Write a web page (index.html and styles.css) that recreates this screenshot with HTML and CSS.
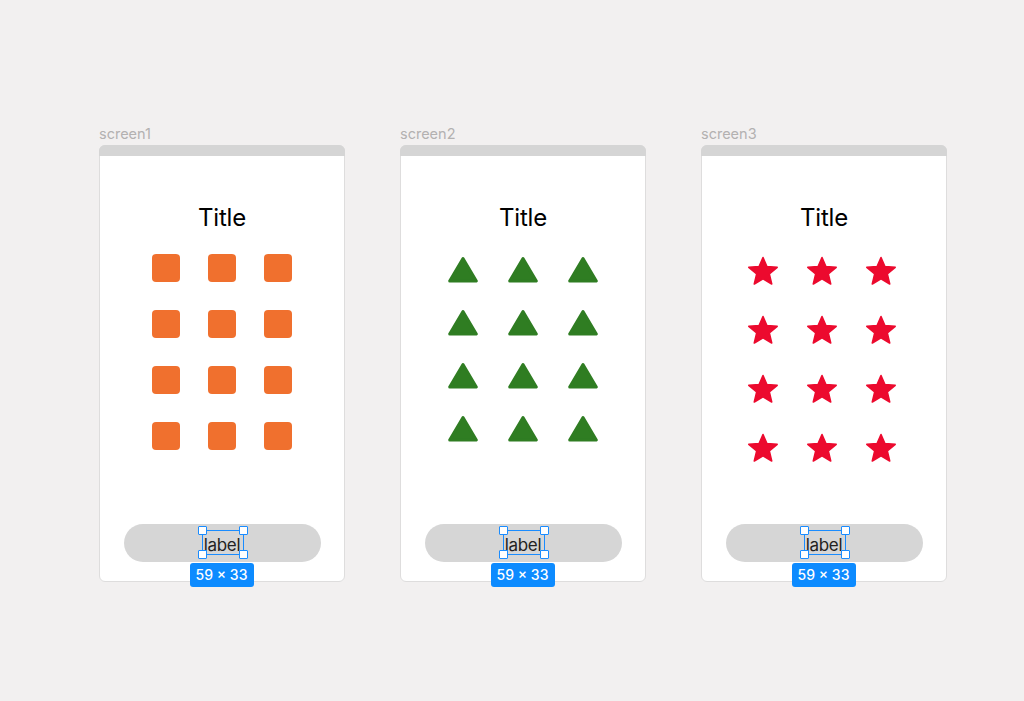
FILE: index.html
```html
<!DOCTYPE html>
<html lang="en">
<head>
    <meta charset="UTF-8">
    <meta name="viewport" content="width=device-width, initial-scale=1.0">
    <title>Screens</title>
    <link rel="stylesheet" href="styles.css">
</head>
<body>
    <div class="screens">

        <!-- screen 1: squares -->
        <div class="screen">
            <div class="screen-name">screen1</div>
            <div class="frame">
                <div class="frame-bar"></div>
                <h1 class="title">Title</h1>
                <div class="grid grid-squares">
                    <div class="square"></div><div class="square"></div><div class="square"></div>
                    <div class="square"></div><div class="square"></div><div class="square"></div>
                    <div class="square"></div><div class="square"></div><div class="square"></div>
                    <div class="square"></div><div class="square"></div><div class="square"></div>
                </div>
                <div class="pill">
                    <span class="pill-label">label</span>
                    <div class="selection">
                        <span class="handle tl"></span><span class="handle tr"></span>
                        <span class="handle bl"></span><span class="handle br"></span>
                    </div>
                    <div class="size-badge">59 × 33</div>
                </div>
            </div>
        </div>

        <!-- screen 2: triangles -->
        <div class="screen">
            <div class="screen-name">screen2</div>
            <div class="frame">
                <div class="frame-bar"></div>
                <h1 class="title">Title</h1>
                <div class="grid grid-triangles">
                    <svg class="tri" viewBox="0 0 30 27"><polygon points="15,2.5 28.3,25 1.7,25"/></svg>
                    <svg class="tri" viewBox="0 0 30 27"><polygon points="15,2.5 28.3,25 1.7,25"/></svg>
                    <svg class="tri" viewBox="0 0 30 27"><polygon points="15,2.5 28.3,25 1.7,25"/></svg>
                    <svg class="tri" viewBox="0 0 30 27"><polygon points="15,2.5 28.3,25 1.7,25"/></svg>
                    <svg class="tri" viewBox="0 0 30 27"><polygon points="15,2.5 28.3,25 1.7,25"/></svg>
                    <svg class="tri" viewBox="0 0 30 27"><polygon points="15,2.5 28.3,25 1.7,25"/></svg>
                    <svg class="tri" viewBox="0 0 30 27"><polygon points="15,2.5 28.3,25 1.7,25"/></svg>
                    <svg class="tri" viewBox="0 0 30 27"><polygon points="15,2.5 28.3,25 1.7,25"/></svg>
                    <svg class="tri" viewBox="0 0 30 27"><polygon points="15,2.5 28.3,25 1.7,25"/></svg>
                    <svg class="tri" viewBox="0 0 30 27"><polygon points="15,2.5 28.3,25 1.7,25"/></svg>
                    <svg class="tri" viewBox="0 0 30 27"><polygon points="15,2.5 28.3,25 1.7,25"/></svg>
                    <svg class="tri" viewBox="0 0 30 27"><polygon points="15,2.5 28.3,25 1.7,25"/></svg>
                </div>
                <div class="pill">
                    <span class="pill-label">label</span>
                    <div class="selection">
                        <span class="handle tl"></span><span class="handle tr"></span>
                        <span class="handle bl"></span><span class="handle br"></span>
                    </div>
                    <div class="size-badge">59 × 33</div>
                </div>
            </div>
        </div>

        <!-- screen 3: stars -->
        <div class="screen">
            <div class="screen-name">screen3</div>
            <div class="frame">
                <div class="frame-bar"></div>
                <h1 class="title">Title</h1>
                <div class="grid grid-stars">
                    <svg class="star" viewBox="0 0 32 30"><polygon points="16,1.5 19.9,10.6 30.2,11.3 22.3,18 24.7,28 16,22.8 7.3,28 9.7,18 1.8,11.3 12.1,10.6"/></svg>
                    <svg class="star" viewBox="0 0 32 30"><polygon points="16,1.5 19.9,10.6 30.2,11.3 22.3,18 24.7,28 16,22.8 7.3,28 9.7,18 1.8,11.3 12.1,10.6"/></svg>
                    <svg class="star" viewBox="0 0 32 30"><polygon points="16,1.5 19.9,10.6 30.2,11.3 22.3,18 24.7,28 16,22.8 7.3,28 9.7,18 1.8,11.3 12.1,10.6"/></svg>
                    <svg class="star" viewBox="0 0 32 30"><polygon points="16,1.5 19.9,10.6 30.2,11.3 22.3,18 24.7,28 16,22.8 7.3,28 9.7,18 1.8,11.3 12.1,10.6"/></svg>
                    <svg class="star" viewBox="0 0 32 30"><polygon points="16,1.5 19.9,10.6 30.2,11.3 22.3,18 24.7,28 16,22.8 7.3,28 9.7,18 1.8,11.3 12.1,10.6"/></svg>
                    <svg class="star" viewBox="0 0 32 30"><polygon points="16,1.5 19.9,10.6 30.2,11.3 22.3,18 24.7,28 16,22.8 7.3,28 9.7,18 1.8,11.3 12.1,10.6"/></svg>
                    <svg class="star" viewBox="0 0 32 30"><polygon points="16,1.5 19.9,10.6 30.2,11.3 22.3,18 24.7,28 16,22.8 7.3,28 9.7,18 1.8,11.3 12.1,10.6"/></svg>
                    <svg class="star" viewBox="0 0 32 30"><polygon points="16,1.5 19.9,10.6 30.2,11.3 22.3,18 24.7,28 16,22.8 7.3,28 9.7,18 1.8,11.3 12.1,10.6"/></svg>
                    <svg class="star" viewBox="0 0 32 30"><polygon points="16,1.5 19.9,10.6 30.2,11.3 22.3,18 24.7,28 16,22.8 7.3,28 9.7,18 1.8,11.3 12.1,10.6"/></svg>
                    <svg class="star" viewBox="0 0 32 30"><polygon points="16,1.5 19.9,10.6 30.2,11.3 22.3,18 24.7,28 16,22.8 7.3,28 9.7,18 1.8,11.3 12.1,10.6"/></svg>
                    <svg class="star" viewBox="0 0 32 30"><polygon points="16,1.5 19.9,10.6 30.2,11.3 22.3,18 24.7,28 16,22.8 7.3,28 9.7,18 1.8,11.3 12.1,10.6"/></svg>
                    <svg class="star" viewBox="0 0 32 30"><polygon points="16,1.5 19.9,10.6 30.2,11.3 22.3,18 24.7,28 16,22.8 7.3,28 9.7,18 1.8,11.3 12.1,10.6"/></svg>
                </div>
                <div class="pill">
                    <span class="pill-label">label</span>
                    <div class="selection">
                        <span class="handle tl"></span><span class="handle tr"></span>
                        <span class="handle bl"></span><span class="handle br"></span>
                    </div>
                    <div class="size-badge">59 × 33</div>
                </div>
            </div>
        </div>

    </div>
</body>
</html>
```

FILE: styles.css
```css
body {
    margin: 0;
    background-color: #f2f0f0;
    font-family: Inter, "Noto Sans", sans-serif;
    height: 701px;
}

.screens {
    display: flex;
    gap: 55px;
    padding: 125px 0 0 99px;
}

.screen {
    width: 246px;
}

.screen-name {
    font-size: 14.5px;
    line-height: 17px;
    color: #b3b1b1;
    margin-bottom: 3px;
}

.frame {
    box-sizing: border-box;
    height: 437px;
    background-color: #fff;
    border: 1px solid #dedddd;
    border-radius: 6px;
    display: flex;
    flex-direction: column;
    align-items: center;
}

.frame-bar {
    align-self: stretch;
    height: 11px;
    margin: -1px -1px 0;
    background-color: #d5d5d5;
    border-radius: 6px 6px 0 0;
}

.title {
    margin: 48px 0 0;
    font-size: 24px;
    line-height: 28px;
    font-weight: 400;
    letter-spacing: -0.2px;
    color: #000;
}

/* shape grids */
.grid {
    display: grid;
    grid-template-columns: repeat(3, auto);
}

.grid-squares {
    margin-top: 22px;
    gap: 28px;
}

.square {
    width: 28px;
    height: 28px;
    background-color: #f0702e;
    border-radius: 4px;
}

.grid-triangles {
    margin-top: 24px;
    column-gap: 30px;
    row-gap: 26px;
}

.tri {
    display: block;
    width: 30px;
    height: 27px;
}

.tri polygon {
    fill: #2f7d22;
    stroke: #2f7d22;
    stroke-width: 3;
    stroke-linejoin: round;
}

.grid-stars {
    margin: 24px 4px 0 0;
    column-gap: 27px;
    row-gap: 29px;
}

.star {
    display: block;
    width: 32px;
    height: 30px;
}

.star polygon {
    fill: #ec0a2e;
    stroke: #ec0a2e;
    stroke-width: 1.6;
    stroke-linejoin: round;
}

/* bottom button with the selected label */
.pill {
    position: relative;
    margin-top: auto;
    margin-bottom: 19px;
    width: 197px;
    height: 38px;
    border-radius: 19px;
    background-color: #d6d6d6;
    display: flex;
    align-items: center;
    justify-content: center;
}

.pill-label {
    font-size: 17px;
    line-height: 20px;
    color: #222;
    padding-top: 3px;
    letter-spacing: -0.3px;
}

.selection {
    position: absolute;
    left: 78px;
    top: 6px;
    width: 40px;
    height: 23px;
    border: 1px solid #1a8cff;
}

.handle {
    position: absolute;
    width: 7px;
    height: 7px;
    background-color: #fff;
    border: 1px solid #1a8cff;
    border-radius: 1px;
}

.handle.tl { left: -5px; top: -5px; }
.handle.tr { right: -5px; top: -5px; }
.handle.bl { left: -5px; bottom: -5px; }
.handle.br { right: -5px; bottom: -5px; }

.size-badge {
    position: absolute;
    left: 66px;
    top: 39px;
    width: 64px;
    height: 24px;
    box-sizing: border-box;
    background-color: #0d8bff;
    border-radius: 3px;
    color: #fff;
    font-size: 14px;
    font-weight: 500;
    line-height: 24px;
    text-align: center;
}
```
